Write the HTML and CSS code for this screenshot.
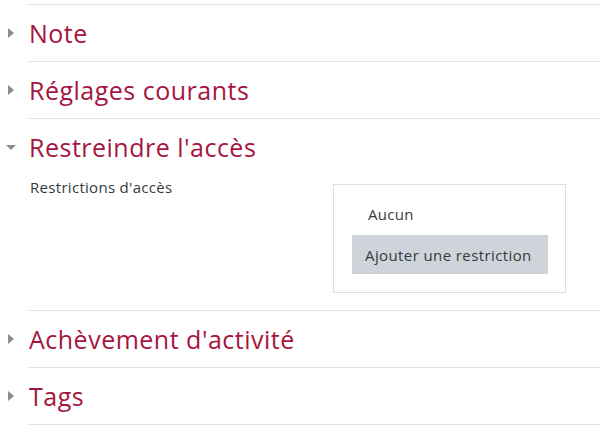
FILE: index.html
```html
<!DOCTYPE html>
<html lang="fr">
<head>
    <meta charset="UTF-8">
    <title>Modifier l'activité</title>
    <link rel="stylesheet" href="styles.css">
</head>
<body>
    <div class="form">
        <div class="section">
            <div class="head"><span class="arrow"></span><h3>Note</h3></div>
        </div>
        <div class="section">
            <div class="head"><span class="arrow"></span><h3>Réglages courants</h3></div>
        </div>
        <div class="section open">
            <div class="head"><span class="arrow"></span><h3>Restreindre l'accès</h3></div>
            <div class="body">
                <div class="label">Restrictions d'accès</div>
                <div class="avail">
                    <p class="none">Aucun</p>
                    <button class="btn">Ajouter une restriction</button>
                </div>
            </div>
        </div>
        <div class="section">
            <div class="head"><span class="arrow"></span><h3>Achèvement d'activité</h3></div>
        </div>
        <div class="section">
            <div class="head"><span class="arrow"></span><h3>Tags</h3></div>
        </div>
    </div>
</body>
</html>
```

FILE: styles.css
```css
* {
    margin: 0;
    padding: 0;
    box-sizing: border-box;
}

body {
    background-color: white;
    font-family: "Open Sans", "Noto Sans", sans-serif;
    color: #373a3c;
    padding-top: 4px;
}

.form {
    margin-left: 28px;
}

.section {
    border-top: 1px solid #e4e4e4;
}

.section:last-child {
    border-bottom: 1px solid #e4e4e4;
}

.head {
    height: 56px;
    display: flex;
    align-items: center;
}

.arrow {
    width: 0;
    height: 0;
    margin-left: -20px;
    margin-right: 15px;
    border-top: 5px solid transparent;
    border-bottom: 5px solid transparent;
    border-left: 6px solid #8c8c8c;
}

.open .arrow {
    margin-left: -22px;
    margin-right: 13px;
    border-left: 5px solid transparent;
    border-right: 5px solid transparent;
    border-top: 5px solid #8c8c8c;
    border-bottom: 0;
}

.head h3 {
    font-weight: normal;
    font-size: 25px;
    color: #a5163f;
    letter-spacing: 0.5px;
}

.body {
    display: flex;
    padding-bottom: 17px;
}

.label {
    width: 305px;
    font-size: 15px;
    letter-spacing: 0.3px;
    padding-left: 2px;
    margin-top: 2px;
}

.avail {
    width: 233px;
    height: 109px;
    margin-top: 9px;
    border: 1px solid #dedede;
    padding: 19px 18px 0 18px;
}

.none {
    font-size: 15px;
    letter-spacing: 0.3px;
    padding-left: 16px;
    margin-bottom: 11px;
}

.btn {
    font-family: inherit;
    font-size: 15px;
    letter-spacing: 0.4px;
    color: #373a3c;
    background-color: #ced4da;
    border: 0;
    height: 39px;
    width: 196px;
    text-align: left;
    padding-left: 13px;
}
```
